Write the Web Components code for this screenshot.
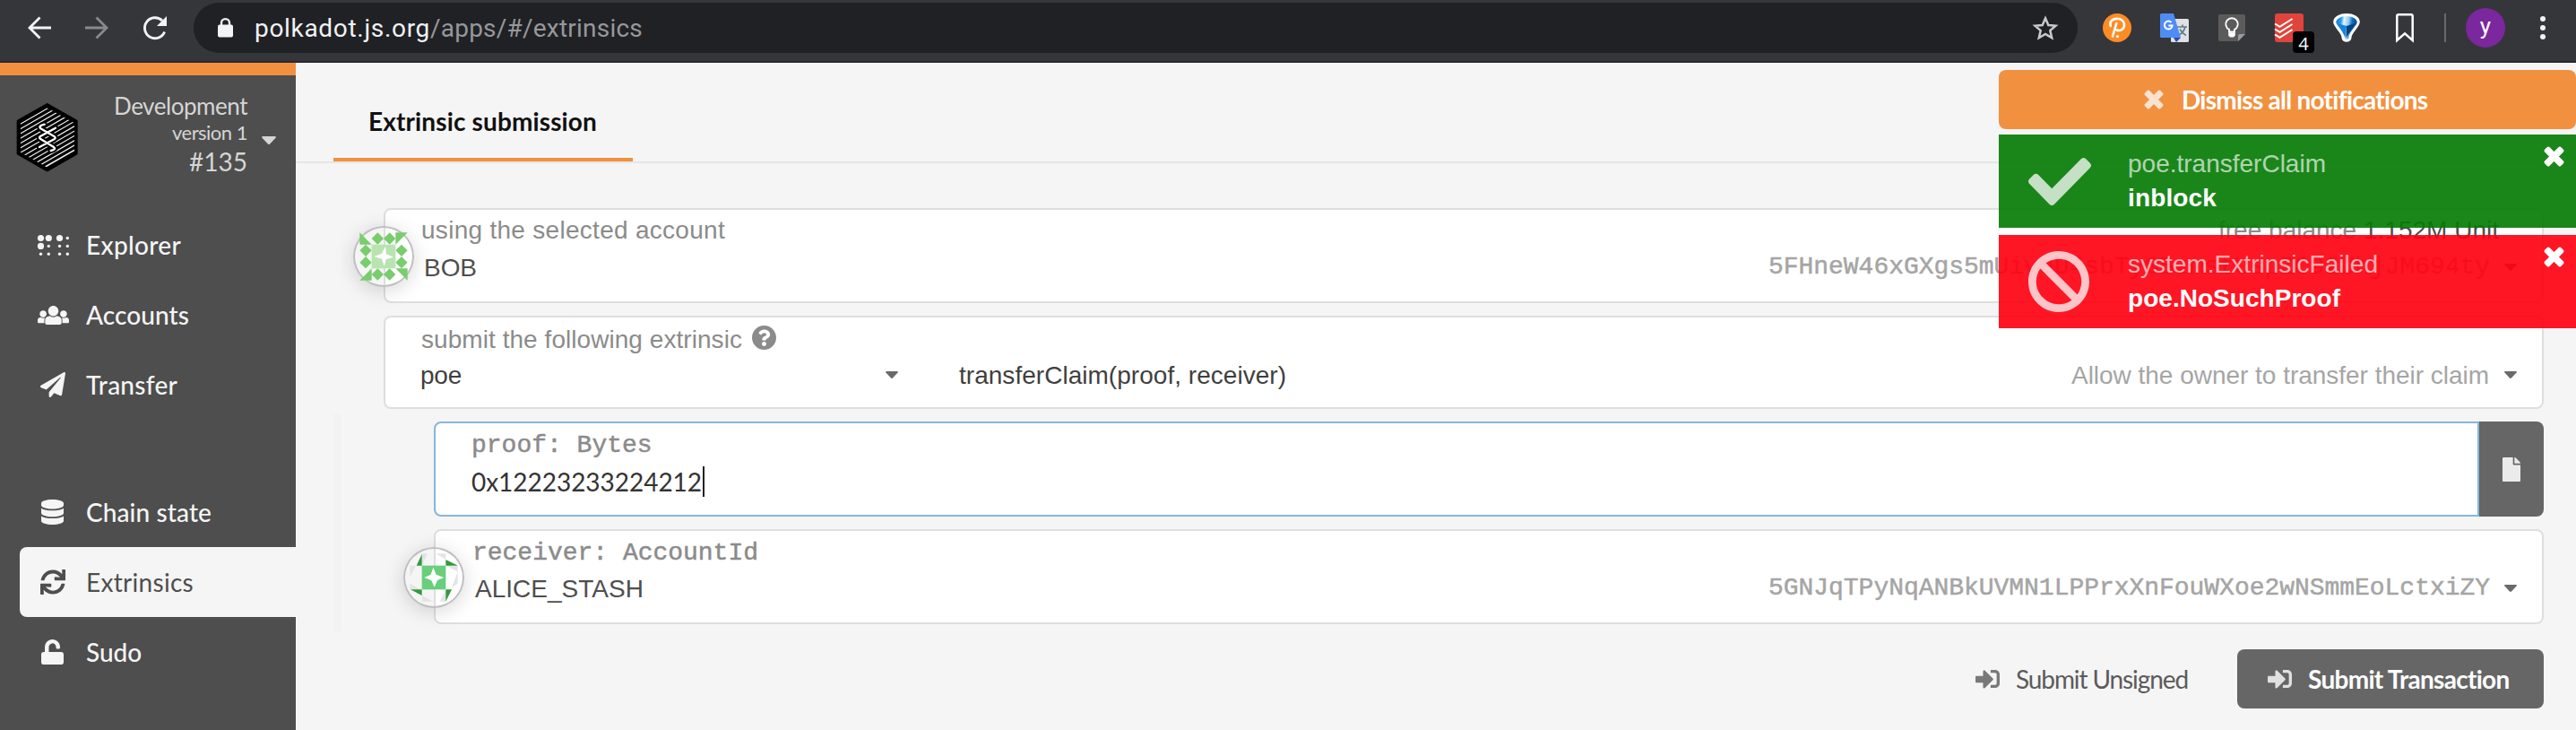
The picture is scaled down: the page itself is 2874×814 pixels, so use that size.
<!DOCTYPE html>
<html lang="en">
<head>
<meta charset="utf-8">
<title>Polkadot/Substrate Portal</title>
<style>
html,body{margin:0;padding:0;height:814px;overflow:hidden;background:#f5f5f5}
body{font:28px/32px "Liberation Sans",Arial,sans-serif;color:#4e4e4e}
</style>
</head>
<body>
<app-window></app-window>
<script>
const P = {
users:['0 64 640 384','<path d="M320 64c57.99 0 105 47.01 105 105s-47.01 105-105 105-105-47.01-105-105S262.01 64 320 64zm113.463 217.366l-39.982-9.996c-49.168 35.365-108.766 27.473-146.961 0l-39.982 9.996C174.485 289.379 152 318.177 152 351.216V412c0 19.882 16.118 36 36 36h264c19.882 0 36-16.118 36-36v-60.784c0-33.039-22.485-61.837-54.537-69.85zM528 300c38.66 0 70-31.34 70-70s-31.34-70-70-70-70 31.34-70 70 31.34 70 70 70zm-416 0c38.66 0 70-31.34 70-70s-31.34-70-70-70-70 31.34-70 70 31.34 70 70 70zm24 112v-60.784c0-16.551 4.593-32.204 12.703-45.599-29.988 14.72-63.336 8.708-85.69-7.37l-26.655 6.664C14.99 310.252 0 329.452 0 351.477V392c0 13.255 10.745 24 24 24h112.169a52.417 52.417 0 0 1-.169-4zm467.642-107.09l-26.655-6.664c-27.925 20.086-60.89 19.233-85.786 7.218C499.369 318.893 504 334.601 504 351.216V412c0 1.347-.068 2.678-.169 4H616c13.255 0 24-10.745 24-24v-40.523c0-22.025-14.99-41.225-36.358-46.567z"/>'],
plane:['0 0 512 512','<path d="M476 3.2L12.5 270.6c-18.1 10.4-15.8 35.6 2.2 43.2L121 358.4l287.3-253.2c5.5-4.9 13.3 2.6 8.6 8.3L176 407v80.5c0 23.6 28.5 32.9 42.500 15.8L282 426l124.600 52.2c14.200 6 30.400-2.900 33-18.200l72-432C515 7.800 493.300-6.800 476 3.200z"/>'],
database:['0 0 448 512','<path d="M448 73.143v45.714C448 159.143 347.667 192 224 192S0 159.143 0 118.857V73.143C0 32.857 100.333 0 224 0s224 32.857 224 73.143zM448 176v102.857C448 319.143 347.667 352 224 352S0 319.143 0 278.857V176c48.125 33.143 136.208 48.572 224 48.572S399.874 209.143 448 176zm0 160v102.857C448 479.143 347.667 512 224 512S0 479.143 0 438.857V336c48.125 33.143 136.208 48.572 224 48.572S399.874 369.143 448 336z"/>'],
sync:['0 0 512 512','<path d="M440.935 12.574l3.966 82.766C399.416 41.904 331.674 8 256 8 134.813 8 33.933 94.924 12.296 209.824 10.908 217.193 16.604 224 24.103 224h49.084c5.57 0 10.377-3.842 11.676-9.259C103.407 137.408 172.931 80 256 80c60.893 0 114.512 30.856 146.104 77.801l-101.53-4.865c-6.845-.327-12.574 5.133-12.574 11.986v47.411c0 6.627 5.373 12 12 12h200.333c6.627 0 12-5.373 12-12V12c0-6.627-5.373-12-12-12h-47.411c-6.853 0-12.315 5.729-11.987 12.574zM256 432c-60.895 0-114.517-30.858-146.109-77.805l101.868 4.871c6.845.327 12.573-5.134 12.573-11.986v-47.412c0-6.627-5.373-12-12-12H12c-6.627 0-12 5.373-12 12V500c0 6.627 5.373 12 12 12h47.385c6.863 0 12.328-5.745 11.985-12.599l-4.129-82.575C112.725 470.166 180.405 504 256 504c121.187 0 222.067-86.924 243.704-201.824 1.388-7.369-4.308-14.176-11.807-14.176h-49.084c-5.57 0-10.377 3.842-11.676 9.259C408.593 374.592 339.069 432 256 432z"/>'],
unlock:['0 0 448 512','<path d="M400 256H152V152.9c0-39.6 31.7-72.5 71.3-72.9 40-.4 72.7 32.1 72.7 72v16c0 13.3 10.7 24 24 24h32c13.3 0 24-10.7 24-24v-16C376 68 307.5-.3 223.5 0 139.5.3 72 69.5 72 153.5V256H48c-26.5 0-48 21.5-48 48v160c0 26.5 21.5 48 48 48h352c26.5 0 48-21.5 48-48V304c0-26.5-21.5-48-48-48z"/>'],
help:['8 8 496 496','<path d="M504 256c0 136.997-111.043 248-248 248S8 392.997 8 256C8 119.083 119.043 8 256 8s248 111.083 248 248zM262.655 90c-54.497 0-89.255 22.957-116.549 63.758-3.536 5.286-2.353 12.415 2.715 16.258l34.699 26.31c5.205 3.947 12.621 3.008 16.665-2.122 17.864-22.658 30.113-35.797 57.303-35.797 20.429 0 45.698 13.148 45.698 32.958 0 14.976-12.363 22.667-32.534 33.976C247.128 238.528 216 254.941 216 296v4c0 6.627 5.373 12 12 12h56c6.627 0 12-5.373 12-12v-1.333c0-28.462 83.186-29.647 83.186-106.667 0-58.002-60.165-102-116.531-102zM256 338c-25.365 0-46 20.635-46 46 0 25.364 20.635 46 46 46s46-20.636 46-46c0-25.365-20.635-46-46-46z"/>'],
ban:['8 8 496 496','<path d="M256 8C119.034 8 8 119.033 8 256s111.034 248 248 248 248-111.034 248-248S392.967 8 256 8zm130.108 117.892c65.448 65.448 70 165.481 20.677 235.637L150.47 105.216c70.204-49.356 170.226-44.735 235.638 20.676zM125.892 386.108c-65.448-65.448-70-165.481-20.677-235.637L361.53 406.784c-70.203 49.356-170.226 44.736-235.638-20.676z"/>'],
check:['0 65 512 382','<path d="M173.898 439.404l-166.4-166.4c-9.997-9.997-9.997-26.206 0-36.204l36.203-36.204c9.997-9.998 26.207-9.998 36.204 0L192 312.69 432.095 72.596c9.997-9.997 26.207-9.997 36.204 0l36.203 36.204c9.997 9.997 9.997 26.206 0 36.204l-294.4 294.401c-9.998 9.997-26.207 9.997-36.204-.001z"/>'],
times:['0 0 20 20','<rect x="-2.2" y="6.4" width="24.4" height="7.2" rx="1.7" transform="rotate(45 10 10)"/><rect x="-2.2" y="6.4" width="24.4" height="7.2" rx="1.7" transform="rotate(-45 10 10)"/>'],
signin:['0 64 512 384','<path d="M416 448h-84c-6.6 0-12-5.4-12-12v-40c0-6.6 5.4-12 12-12h84c17.7 0 32-14.3 32-32V160c0-17.7-14.3-32-32-32h-84c-6.6 0-12-5.4-12-12V76c0-6.6 5.4-12 12-12h84c53 0 96 43 96 96v192c0 53-43 96-96 96zm-47-201L201 79c-15-15-41-4.5-41 17v96H24c-13.3 0-24 10.7-24 24v96c0 13.3 10.7 24 24 24h136v96c0 21.5 26 32 41 17l168-168c9.3-9.4 9.3-24.6 0-34z"/>'],
file:['0 0 384 512','<path d="M224 136V0H24C10.7 0 0 10.7 0 24v464c0 13.3 10.7 24 24 24h336c13.3 0 24-10.7 24-24V160H248c-13.2 0-24-10.800-24-24zm160-14.100v6.100H256V0h6.100c6.400 0 12.500 2.500 17 7l97.900 98c4.500 4.500 7 10.600 7 16.900z"/>'],
caret:['0 0 14 8','<path d="M1 0h12q1.600.3.600 1.600L8 7.500q-1 .9-2 0L.4 1.600Q-.6.300 1 0z"/>'],
dots:['0 0 35 23','<circle cx="3.500" cy="3.500" r="3.600"/><circle cx="12.300" cy="3.500" r="3.600"/><circle cx="24.500" cy="3.500" r="3.600"/><circle cx="33.300" cy="3.500" r="1.700"/><circle cx="3.500" cy="12.400" r="3.600"/><circle cx="12.300" cy="12.400" r="1.700"/><circle cx="24.500" cy="12.400" r="1.700"/><circle cx="33.300" cy="12.400" r="1.700"/><circle cx="3.500" cy="21.200" r="1.700"/><circle cx="12.300" cy="21.200" r="1.700"/><circle cx="24.500" cy="21.200" r="1.700"/><circle cx="33.300" cy="21.200" r="1.700"/>'],
back:['0 0 26 26','<path d="M26 13H2M13.500 1.500L2 13l11.500 11.500" fill="none" stroke="currentColor" stroke-width="2.800"/>'],
forward:['0 0 26 26','<path d="M0 13h24M12.500 1.500L24 13 12.500 24.500" fill="none" stroke="currentColor" stroke-width="2.800"/>'],
reload:['0 0 27 26','<path d="M24.600 17.500A11.500 11.500 0 1 1 22 5" fill="none" stroke="currentColor" stroke-width="2.900"/><path d="M27 0v11H16z"/>'],
lock:['0 0 17 22','<path d="M4 9V5.600a4.500 4.500 0 0 1 9 0V9" fill="none" stroke="currentColor" stroke-width="2.300"/><rect y="7.500" width="17" height="14" rx="2"/>'],
star:['0 0 30 28','<path d="M15 3.300l3.300 7.700 8.200.7-6.200 5.400 1.900 8.100L15 20.900l-7.200 4.300 1.900-8.100L3.500 11.700l8.200-.7z" fill="none" stroke="currentColor" stroke-width="2.500"/>'],
pcircle:['0 0 32 32','<circle cx="16" cy="16" r="16" fill="#fd8c25"/><path d="M8.800 14C7 9.500 10.500 5.900 15.800 5.900c5 0 8.200 3 8.200 7 0 4.600-4.200 7.200-8.700 5.600M15.300 11L11 25.500" fill="none" stroke="#fff" stroke-width="2.600" stroke-linecap="round"/><circle cx="16.500" cy="25.600" r="1.600" fill="#fff"/>'],
translate:['0 0 32 32','<rect x="12" y="6" width="20" height="26" rx="1.500" fill="#dfe1e3"/><path d="M19 15h11M25 12.500V15M28 15c-1 4.500-4 7.500-7.500 9.500M22 17.500c1.500 3 4 5.500 7 7" fill="none" stroke="#607d8b" stroke-width="1.700"/><path d="M15 27h8l-5 5z" fill="#3749ab"/><path d="M1.500 0H15l8 27H1.500Q0 27 0 25.500v-24Q0 0 1.500 0z" fill="#4f8df5"/><path d="M12.500 10A4.400 4.400 0 1 0 13.600 13.600H9.300" fill="none" stroke="#fff" stroke-width="2"/>'],
keep:['0 0 30 30','<path d="M2 0h26q2 0 2 2v20l-8 8H2q-2 0-2-2V2Q0 0 2 0z" fill="#5b5b5b"/><path d="M22 30v-6q0-2 2-2h6z" fill="#9a9a9a"/><path d="M12 19.500v-2.600a6.700 6.700 0 1 1 6 0v2.600z" fill="none" stroke="#fff" stroke-width="1.900"/><path d="M11.200 20.200h7.600v3.500l-2 1.800h-3.600l-2-1.800z" fill="#fff"/>'],
todoist:['0 0 32 32','<rect width="32" height="32" rx="3" fill="#e1443b"/><path d="M0 11.500l5.500 3.300L19.500 6M0 17.500l5.500 3.300L19.500 12M0 23.500l5.500 3.300L19.500 18" fill="none" stroke="#fff" stroke-width="2"/>'],
balloon:['0 0 30 32','<defs><linearGradient id="g" x1="0" x2="1" y2=".15"><stop offset="0" stop-color="#0e6cc4"/><stop offset=".3" stop-color="#2ea0ee"/><stop offset=".42" stop-color="#e9f5fd"/><stop offset=".62" stop-color="#8ec9f3"/><stop offset=".75" stop-color="#1272c8"/><stop offset="1" stop-color="#063d86"/></linearGradient></defs><path d="M15 1.600C7.500 1.600 1.700 5 1.700 9.600c0 4.500 8 10.400 9 15.400l.6 3.200q.5 2 3.700 2t3.700-2l.6-3.200c1-5 9-10.900 9-15.400 0-4.600-5.800-8-13.300-8z" fill="url(#g)" stroke="#fff" stroke-width="3"/><path d="M5 11l8.500 15.500L15 14z" fill="#1485dd"/><path d="M15 14l-.5 13L25 11z" fill="#06427f"/>'],
bookmark:['0 0 20 32','<path d="M1.300 30V3q0-1.700 1.700-1.700h14q1.700 0 1.700 1.700v27L10 22.300z" fill="none" stroke="#fff" stroke-width="2.500"/>'],
menu:['0 0 6 26','<circle cx="3" cy="3" r="3"/><circle cx="3" cy="13" r="3"/><circle cx="3" cy="23" r="3"/>']
};

const make = (name, css, html) => customElements.define(name, class extends HTMLElement {
  constructor(){ super(); this.attachShadow({mode:'open'}).innerHTML = `<style>*{box-sizing:border-box}${css}</style>${html}`; }
});

customElements.define('ui-icon', class extends HTMLElement {
  connectedCallback(){
    if (this.shadowRoot) return;
    const [vb, body] = P[this.getAttribute('name')];
    const w = this.getAttribute('w'), h = this.getAttribute('h');
    this.attachShadow({mode:'open'}).innerHTML = `<style>:host{display:block;flex:none;width:${w}px;height:${h}px}svg{display:block;overflow:visible}</style><svg width="${w}" height="${h}" viewBox="${vb}" preserveAspectRatio="none" fill="currentColor">${body}</svg>`;
  }
});

make('browser-bar', `
:host{display:flex;align-items:center;height:70px;padding-bottom:6px;background:#35363a;border-bottom:2px solid #292a2d;color:#f1f3f4;box-sizing:border-box}
.nav{display:flex;gap:38px;width:216px;padding-left:31px;flex:none}
.fwd{color:#88898c}
.url{display:flex;align-items:center;width:2102px;height:56px;border-radius:28px;background:#202124;padding:0 21px 0 27px;flex:none}
.url .lock{margin-right:24px}.url ui-text{padding-top:2px}.path{color:#97989b}
.star{margin-left:auto;color:#c8c9cb}
.ext{position:relative;flex:none}
.badge{position:absolute;left:20px;top:20px;width:24px;height:24px;border-radius:4px;background:#000;color:#fff;font:20px/28px "Open Sans",sans-serif;text-align:center}
.sep{width:2px;height:32px;background:#67686b;flex:none;margin:0 22px 0 34px}
.me{width:44px;height:44px;border-radius:50%;background:#7b279d;color:#fff;font:26px/40px Roboto,sans-serif;text-align:center;flex:none;margin-right:39px}`,
`<div class="nav"><ui-icon name="back" w="26" h="26"></ui-icon><ui-icon class="fwd" name="forward" w="26" h="26"></ui-icon><ui-icon name="reload" w="27" h="26"></ui-icon></div>
<div class="url"><ui-icon class="lock" name="lock" w="17" h="22"></ui-icon><ui-text face="roboto" fit="196">polkadot.js.org</ui-text><ui-text class="path" face="roboto" fit="237">/apps/#/extrinsics</ui-text><ui-icon class="star" name="star" w="30" h="28"></ui-icon></div>
<ui-icon name="pcircle" w="32" h="32" style="margin-left:28px"></ui-icon>
<ui-icon name="translate" w="32" h="32" style="margin-left:32px"></ui-icon>
<ui-icon name="keep" w="30" h="30" style="margin-left:33px"></ui-icon>
<div class="ext" style="margin-left:33px"><ui-icon name="todoist" w="32" h="32"></ui-icon><div class="badge">4</div></div>
<ui-icon name="balloon" w="30" h="32" style="margin-left:33px"></ui-icon>
<ui-icon name="bookmark" w="20" h="32" style="margin-left:40px"></ui-icon>
<div class="sep"></div><div class="me">y</div><ui-icon name="menu" w="6" h="26"></ui-icon>`);

make('chain-logo', `:host{display:block;width:70px;height:78px;flex:none}svg{display:block}`,
`<svg width="70" height="78" viewBox="26 24 210 234"><defs><clipPath id="c"><path d="M130 43l91 51v97l-91 51-90-51V94z"/></clipPath></defs>
<path d="M130 31l98 56v109l-98 56-98-56V87z" stroke="#000" stroke-width="8" stroke-linejoin="round"/>
<g clip-path="url(#c)" stroke="#f4f4f4" stroke-width="3.600"><path d="M40 97L150 33.500M40 113L160 44M40 129L190 42.500M40 145L215 44M40 161L230 51M40 177L230 67M40 193L230 83M40 209L230 99M40 225L230 115M40 241L230 131M40 257L230 147M60 261L230 163"/><path d="M80 265L230 179M105 267L230 195" stroke-width="5"/></g>
<g fill="none" stroke-linecap="round" stroke-linejoin="round"><g id="s"><path d="M121 98q-22 5-13 14l45 26q8 5 0 10l-49 26M158 110l-50 27q-8 5 0 10l44 27q9 8-10 12" stroke="#000" stroke-width="19"/><path d="M121 98q-22 5-13 14l45 26q8 5 0 10l-49 26M158 110l-50 27q-8 5 0 10l44 27q9 8-10 12" stroke="#fff" stroke-width="7"/></g></g></svg>`);

make('nav-item', `
:host{display:flex;align-items:center;height:78px;margin-left:22px;padding-left:20px;color:#f5f5f5;box-sizing:border-box;border-radius:8px 0 0 8px}
:host([active]){background:#f5f5f5;color:#4e4e4e}
.i{width:35px;margin-right:19px;display:flex;justify-content:center}`,
`<div class="i"><slot name="icon"></slot></div><slot></slot>`);

make('side-bar', `
:host{display:block;width:330px;flex:none;background:#4e4e4e;border-top:14px solid #f19140;box-sizing:border-box;font-family:Lato}
.top{display:flex;height:150px;padding:30px 22px 0 18px;color:#d5d5d5;align-items:flex-start}
.info{margin-left:auto;display:flex;flex-direction:column;align-items:flex-end;margin-top:-12px}
.caret{margin:38px 0 0 16px}
.gap{height:64px}`,
`<div class="top"><chain-logo></chain-logo><div class="info"><ui-text face="lato" size="26" lh="32" fit="149">Development</ui-text><ui-text face="lato" size="22" lh="28" fit="84">version 1</ui-text><ui-text face="lato" size="28" lh="36" fit="65">#135</ui-text></div><ui-icon class="caret" name="caret" w="16" h="9"></ui-icon></div>
<nav-item><ui-icon slot="icon" name="dots" w="35" h="23"></ui-icon><ui-text face="lato" weight="500" fit="106">Explorer</ui-text></nav-item>
<nav-item><ui-icon slot="icon" name="users" w="35" h="21"></ui-icon><ui-text face="lato" weight="500" fit="115">Accounts</ui-text></nav-item>
<nav-item><ui-icon slot="icon" name="plane" w="28" h="28" style="margin-right:2px"></ui-icon><ui-text face="lato" weight="500" fit="102">Transfer</ui-text></nav-item>
<div class="gap"></div>
<nav-item><ui-icon slot="icon" name="database" w="25" h="28" style="margin-right:2px"></ui-icon><ui-text face="lato" weight="500" fit="140">Chain state</ui-text></nav-item>
<nav-item active><ui-icon slot="icon" name="sync" w="28" h="28" style="margin-right:2px"></ui-icon><ui-text face="lato" fit="120">Extrinsics</ui-text></nav-item>
<nav-item><ui-icon slot="icon" name="unlock" w="25" h="28" style="margin-right:2px"></ui-icon><ui-text face="lato" weight="500" fit="62">Sudo</ui-text></nav-item>`);

make('tab-bar', `
:host{display:flex;height:112px;padding-left:42px;border-bottom:2px solid #e6e6e6;box-sizing:border-box;flex:none}
.tab{width:334px;border-bottom:4px solid #f19140;color:#111;padding:49px 0 0 39px}`,
`<div class="tab"><ui-text face="lato" weight="700" fit="255">Extrinsic submission</ui-text></div>`);

make('field-card', `
:host{display:flex;flex-direction:column;position:relative;height:106px;background:#fff;border:2px solid #dedede;border-radius:8px;box-sizing:border-box;flex:none;padding:var(--top,6px) 28px 0 var(--left,41px)}
:host([focus]){border-color:#85b7d9;border-radius:8px 0 0 8px;flex:1}
.label{display:flex;align-items:center;height:32px;color:#8b8b8b}
.value{display:flex;align-items:center;height:32px;margin-top:var(--gap,10px)}
::slotted([slot=over]){position:absolute;top:18px;left:-36px}`,
`<div class="label"><slot name="label"></slot></div><div class="value"><slot></slot></div><slot name="over"></slot>`);

customElements.define('ident-icon', class extends HTMLElement {
  constructor(){
    super();
    const bob = this.getAttribute('who') === 'bob';
    const d = (x,y)=>`M${x} ${y-20}l20 20-20 20-20-20z`;
    const art = bob
      ? `<path fill="#78cd6d" d="${[[124,108],[164,108],[84,148],[84,188],[204,148],[204,188],[124,228],[164,228]].map(p=>d(...p)).join('')}M64 88l40 40H64zM184 88h40l-40 40zM104 208v40H64zM184 208h40v40z"/><path fill="#b9e4b2" d="M104 128h80v80h-80z"/><path fill="#fff" d="M150 135l3 25 24 10-25 7-6 23-8-24-26-8 25-9z"/>`
      : `<g transform="translate(12 6)"><path fill="#e4e4e4" d="M92 82h20l-20 40zM140 82h32v20zM52 122h20l-20 40zM172 122l40 20v-20zM52 182v20h36zM212 142v40l-20 14zM92 222v20h38zM152 242h20v-38z"/><path fill="#35993f" d="M92 84v38H74zM172 102l40 20h-40zM54 202h38v20zM172 202h20l-20 40z"/><path fill="#68cf7b" d="M92 122h80v80H92z"/><path fill="#fff" d="M130 128l10 24 26 10-22 9-10 23-10-22-24-10 22-10z"/></g>`;
    this.attachShadow({mode:'open'}).innerHTML = `<style>:host{display:block;width:68px;height:68px;border-radius:50%;box-shadow:0 4px 20px 2px rgba(0,0,0,.13),inset 0 0 0 2px #bfbfbf}svg{display:block;overflow:visible}</style><svg width="68" height="68" viewBox="42 66 204 204">${art}</svg>`;
  }
});

make('account-pane', `
:host{display:block;flex:1;min-width:0}
.body{padding:50px 36px 0 98px}
.args{position:relative;padding:14px 0 8px 56px}
.rail{position:absolute;left:-56px;top:6px;width:8px;height:242px;background:#f2f2f2}
.row{display:flex;margin-bottom:14px}
.file{width:72px;background:#666;border-radius:0 8px 8px 0;color:#ebebeb;display:flex;align-items:center;justify-content:center}
.end{margin-left:auto;color:#a5a5a5}
.car{margin-left:16px;margin-right:0;color:#6a6a6a}
field-card ui-text:not([face]){padding-top:2px}
ui-text[slot=label]:not([face]){margin-left:-1px}
.txt{color:#3f3f3f}.in{color:#333}
.cursor{width:2px;height:34px;background:#222;margin-left:1px;flex:none}
.help{margin-left:11px;margin-top:-3px}
ui-text.bal[slot=label]{margin-left:auto;margin-right:20px}.bal b{font-weight:400;color:#4e4e4e}
.actions{display:flex;justify-content:flex-end;padding-top:20px;font-family:Lato}
.btn{display:flex;align-items:center;height:66px;color:#5b5b5b;padding-right:55px}
.btn ui-text{margin-top:-1px}
.btn.primary{width:342px;border-radius:8px;background:#666;color:#fff;padding:0 0 0 34px}
.btn ui-icon{margin-right:18px;opacity:.8}`,
`<tab-bar></tab-bar><div class="body">
<field-card><ui-text slot="label" fit="339">using the selected account</ui-text><ui-text slot="label" class="bal" fit="313">free balance <b>1.152M Unit</b></ui-text>
<ui-text style="margin-left:2px" fit="59">BOB</ui-text><ui-text class="end" face="mono" fit="805">5FHneW46xGXgs5mUiveU4sbTyGBzmstUspZC92UhjJM694ty</ui-text><ui-icon class="car" name="caret" w="14" h="8"></ui-icon><ident-icon slot="over" who="bob"></ident-icon></field-card>
<field-card style="margin-top:14px;height:104px;--top:8px;--gap:8px"><ui-text slot="label" fit="358">submit the following extrinsic</ui-text><ui-icon slot="label" class="help" name="help" w="27" h="27"></ui-icon>
<ui-text class="txt" style="width:517px;margin-left:-2px" fit="46">poe</ui-text><ui-icon name="caret" w="14" h="8" style="margin-left:2px;color:#6a6a6a"></ui-icon><ui-text class="txt" style="margin-left:68px" fit="365">transferClaim(proof, receiver)</ui-text><ui-text class="end" fit="466">Allow the owner to transfer their claim</ui-text><ui-icon class="car" name="caret" w="14" h="8" style="margin-left:17px"></ui-icon></field-card>
<div class="args"><div class="rail"></div>
<div class="row"><field-card focus style="--top:9px;--gap:8px;--left:40px"><ui-text slot="label" face="mono" fit="201.600">proof: Bytes</ui-text><ui-text class="in" face="lato" fit="257">0x12223233224212</ui-text><div class="cursor"></div></field-card><div class="file"><ui-icon name="file" w="20" h="27"></ui-icon></div></div>
<field-card style="--top:9px;--gap:7px"><ui-text slot="label" face="mono" fit="319">receiver: AccountId</ui-text><ui-text style="margin-left:3px" fit="188">ALICE_STASH</ui-text><ui-text class="end" face="mono" fit="805">5GNJqTPyNqANBkUVMN1LPPrxXnFouWXoe2wNSmmEoLctxiZY</ui-text><ui-icon class="car" name="caret" w="14" h="8"></ui-icon><ident-icon slot="over" who="alice"></ident-icon></field-card></div>
<div class="actions"><div class="btn"><ui-icon name="signin" w="27" h="20"></ui-icon><ui-text face="lato" fit="192">Submit Unsigned</ui-text></div><div class="btn primary"><ui-icon name="signin" w="27" h="20"></ui-icon><ui-text face="lato" weight="700" fit="225">Submit Transaction</ui-text></div></div>
</div>`);

make('status-note', `
:host{display:flex;height:104px;position:relative;box-sizing:border-box;padding-left:33px;color:#fff;background:rgba(4,123,4,.91)}
:host([kind=error]){background:rgba(255,0,16,.915)}
.i{width:111px;display:flex;align-items:center;opacity:.75}
.t{display:flex;flex-direction:column;gap:6px;padding-top:17px}.t .a{opacity:.65}
.x{position:absolute;right:14px;top:14px}`,
`<div class="i"><slot name="icon"></slot></div><div class="t"><div class="a"><slot name="action"></slot></div><slot></slot></div><ui-icon class="x" name="times" w="21" h="21"></ui-icon>`);

make('status-stack', `
:host{position:absolute;right:0;top:78px;width:644px;display:flex;flex-direction:column}
.all{height:66px;border-radius:8px;background:#f19140;color:#fff;display:flex;align-items:center;padding-left:163px;margin-bottom:6px}
.all ui-icon{opacity:.75;margin-right:21px}.all ui-text{margin-top:-1px}`,
`<div class="all"><ui-icon name="times" w="20" h="20"></ui-icon><ui-text face="lato" weight="700" fit="275">Dismiss all notifications</ui-text></div>
<status-note><ui-icon slot="icon" name="check" w="70" h="53"></ui-icon><ui-text slot="action" fit="221">poe.transferClaim</ui-text><ui-text weight="700" fit="99">inblock</ui-text></status-note>
<status-note kind="error" style="margin-top:8px"><ui-icon slot="icon" name="ban" w="68" h="68"></ui-icon><ui-text slot="action" fit="279">system.ExtrinsicFailed</ui-text><ui-text weight="700" fit="237">poe.NoSuchProof</ui-text></status-note>`);

make('app-window', `:host{display:flex;flex-direction:column;width:2874px;height:814px;position:relative;overflow:hidden}.m{display:flex;flex:1}`,
`<browser-bar></browser-bar><div class="m"><side-bar></side-bar><account-pane></account-pane></div><status-stack></status-stack>`);

/* Text run with a chosen face; "fit" tracks the letters out to the given advance width. */
const FACES = {lato:'Lato,sans-serif', mono:'"Liberation Mono",monospace', roboto:'Roboto,sans-serif', sans:'"Liberation Sans",Arial,sans-serif'};
customElements.define('ui-text', class extends HTMLElement {
  connectedCallback(){
    if (this.shadowRoot) return;
    const g = (k,d)=>this.getAttribute(k)||d;
    this.attachShadow({mode:'open'}).innerHTML = `<style>:host{display:block;flex:none;white-space:pre;font:${g('weight',400)} ${g('size',28)}px/${g('lh',32)}px ${FACES[g('face','sans')]};${g('face','')==='mono'?'-webkit-text-stroke:.5px currentColor':''}}span{display:inline-block}</style><span><slot></slot></span>`;
    const s = this.shadowRoot.querySelector('span');
    const want = +g('fit',0), n = this.textContent.length;
    if (want) s.style.letterSpacing = (want - s.getBoundingClientRect().width)/n + 'px';
  }
});
</script>
</body>
</html>
